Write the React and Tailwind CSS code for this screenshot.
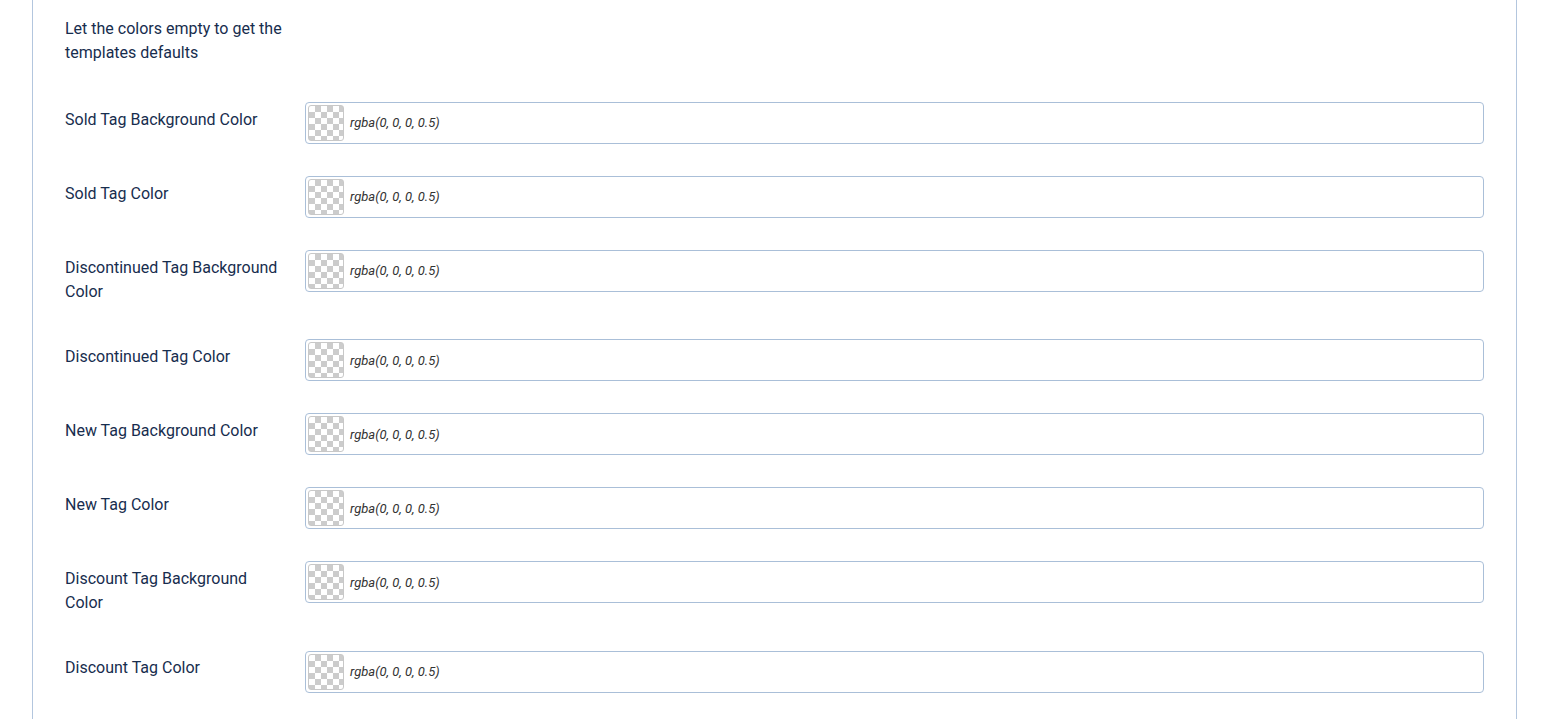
import React from "react";

const fields = [
  "Sold Tag Background Color",
  "Sold Tag Color",
  "Discontinued Tag Background Color",
  "Discontinued Tag Color",
  "New Tag Background Color",
  "New Tag Color",
  "Discount Tag Background Color",
  "Discount Tag Color",
];

function ColorField({ label }) {
  return (
    <div className="flex items-start gap-[20px]">
      <label className="w-[220px] shrink-0 pt-[5.5px] pb-[3.9px] text-[16px] leading-[24px] font-normal text-[#172d4e]">
        {label}
      </label>
      <div className="flex h-[42px] flex-1 items-center rounded-[4px] border border-[#aabfd8] bg-white pl-[2px]">
        <span className="h-[36px] w-[36px] shrink-0 rounded-[3px] border border-[#c8c8c8] bg-[image:repeating-conic-gradient(#cccccc_0_25%,#ffffff_0_50%)] bg-[length:12px_12px]" />
        <span className="ml-[6px] text-[13px] italic text-[#333333]">rgba(0, 0, 0, 0.5)</span>
      </div>
    </div>
  );
}

export default function App() {
  return (
    <div className="min-h-screen bg-white px-[32px] font-['Roboto','Liberation_Sans',sans-serif]">
      <div className="border-x border-[#b3c6de] px-[32px] pt-[17px] pb-[32px]">
        <p className="w-[220px] text-[16px] leading-[24px] font-normal text-[#172d4e]">
          Let the colors empty to get the templates defaults
        </p>
        <div className="mt-[37px] flex flex-col gap-[32px]">
          {fields.map((f) => (
            <ColorField key={f} label={f} />
          ))}
        </div>
      </div>
    </div>
  );
}
